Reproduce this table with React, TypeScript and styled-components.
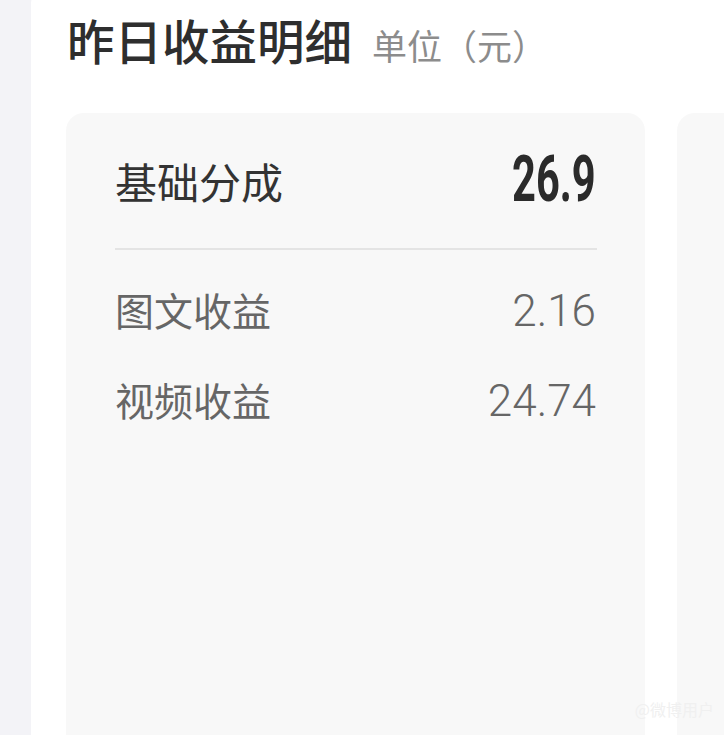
import React from "react";
import styled, { createGlobalStyle } from "styled-components";

const Global = createGlobalStyle`
  html, body { margin: 0; padding: 0; }
  body {
    background: #f3f3f7;
    font-family: "Noto Sans CJK SC", "Noto Sans", sans-serif;
    overflow: hidden;
  }
`;

const Page = styled.div`
  width: 724px;
  height: 735px;
  display: flex;
  overflow: hidden;
  position: relative;
`;

const Panel = styled.section`
  margin-left: 31px;
  margin-top: -18px;
  flex: 1;
  min-width: 0;
  background: #ffffff;
  border-radius: 22px 0 0 0;
  padding-top: 26px;
  display: flex;
  flex-direction: column;
  overflow: hidden;
`;

const TitleRow = styled.div`
  display: flex;
  align-items: baseline;
  gap: 20px;
  padding-left: 36px;
  height: 64px;
`;

const Title = styled.h2`
  margin: 0;
  font-size: 47.5px;
  font-weight: 500;
  color: #2e2e2e;
  line-height: 64px;
`;

const Unit = styled.span`
  font-size: 35px;
  color: #8c8c8c;
  font-weight: 400;
`;

const Cards = styled.div`
  display: flex;
  gap: 32px;
  margin-top: 41px;
  padding-left: 35px;
  flex: 1;
`;

const Card = styled.div<{ $w: number }>`
  flex: 0 0 ${(p) => p.$w}px;
  background: #f8f8f8;
  border-radius: 18px 18px 0 0;
  padding: 29px 48px 0 49px;
  box-sizing: border-box;
  min-height: 700px;
`;

const MainRow = styled.div`
  display: flex;
  align-items: center;
  justify-content: space-between;
  height: 76px;
`;

const MainLabel = styled.span`
  font-size: 42px;
  color: #333333;
  font-weight: 400;
`;

const MainValue = styled.span`
  display: inline-block;
  font-family: Roboto, "Liberation Sans", sans-serif;
  font-weight: 700;
  font-size: 64px;
  color: #2b2b2b;
  transform: scaleX(0.65);
  transform-origin: right center;
  line-height: 1;
  margin-right: 1px;
`;

const Divider = styled.hr`
  border: none;
  height: 2px;
  background: #e4e4e4;
  margin: 30px 0 0 0;
`;

const List = styled.div`
  display: flex;
  flex-direction: column;
  gap: 30px;
  margin-top: 29px;
`;

const Row = styled.div`
  display: flex;
  align-items: center;
  justify-content: space-between;
  height: 60px;
`;

const Label = styled.span`
  font-size: 39px;
  color: #666666;
`;

const Value = styled.span`
  font-family: Roboto, "Liberation Sans", sans-serif;
  font-size: 44px;
  color: #666666;
  font-weight: 300;
  margin-right: 1px;
  padding-top: 4px;
`;

const Watermark = styled.span`
  position: absolute;
  right: 10px;
  bottom: 14px;
  font-size: 16px;
  color: #f0f0f0;
  font-family: "Noto Sans CJK SC", sans-serif;
`;

const rows = [
  { label: "图文收益", value: "2.16" },
  { label: "视频收益", value: "24.74" },
];

export default function App() {
  return (
    <>
      <Global />
      <Page>
        <Panel>
          <TitleRow>
            <Title>昨日收益明细</Title>
            <Unit>单位（元）</Unit>
          </TitleRow>
          <Cards>
            <Card $w={579}>
              <MainRow>
                <MainLabel>基础分成</MainLabel>
                <MainValue>26.9</MainValue>
              </MainRow>
              <Divider />
              <List>
                {rows.map((r) => (
                  <Row key={r.label}>
                    <Label>{r.label}</Label>
                    <Value>{r.value}</Value>
                  </Row>
                ))}
              </List>
            </Card>
            <Card $w={579} />
          </Cards>
        </Panel>
        <Watermark>@微博用户</Watermark>
      </Page>
    </>
  );
}
